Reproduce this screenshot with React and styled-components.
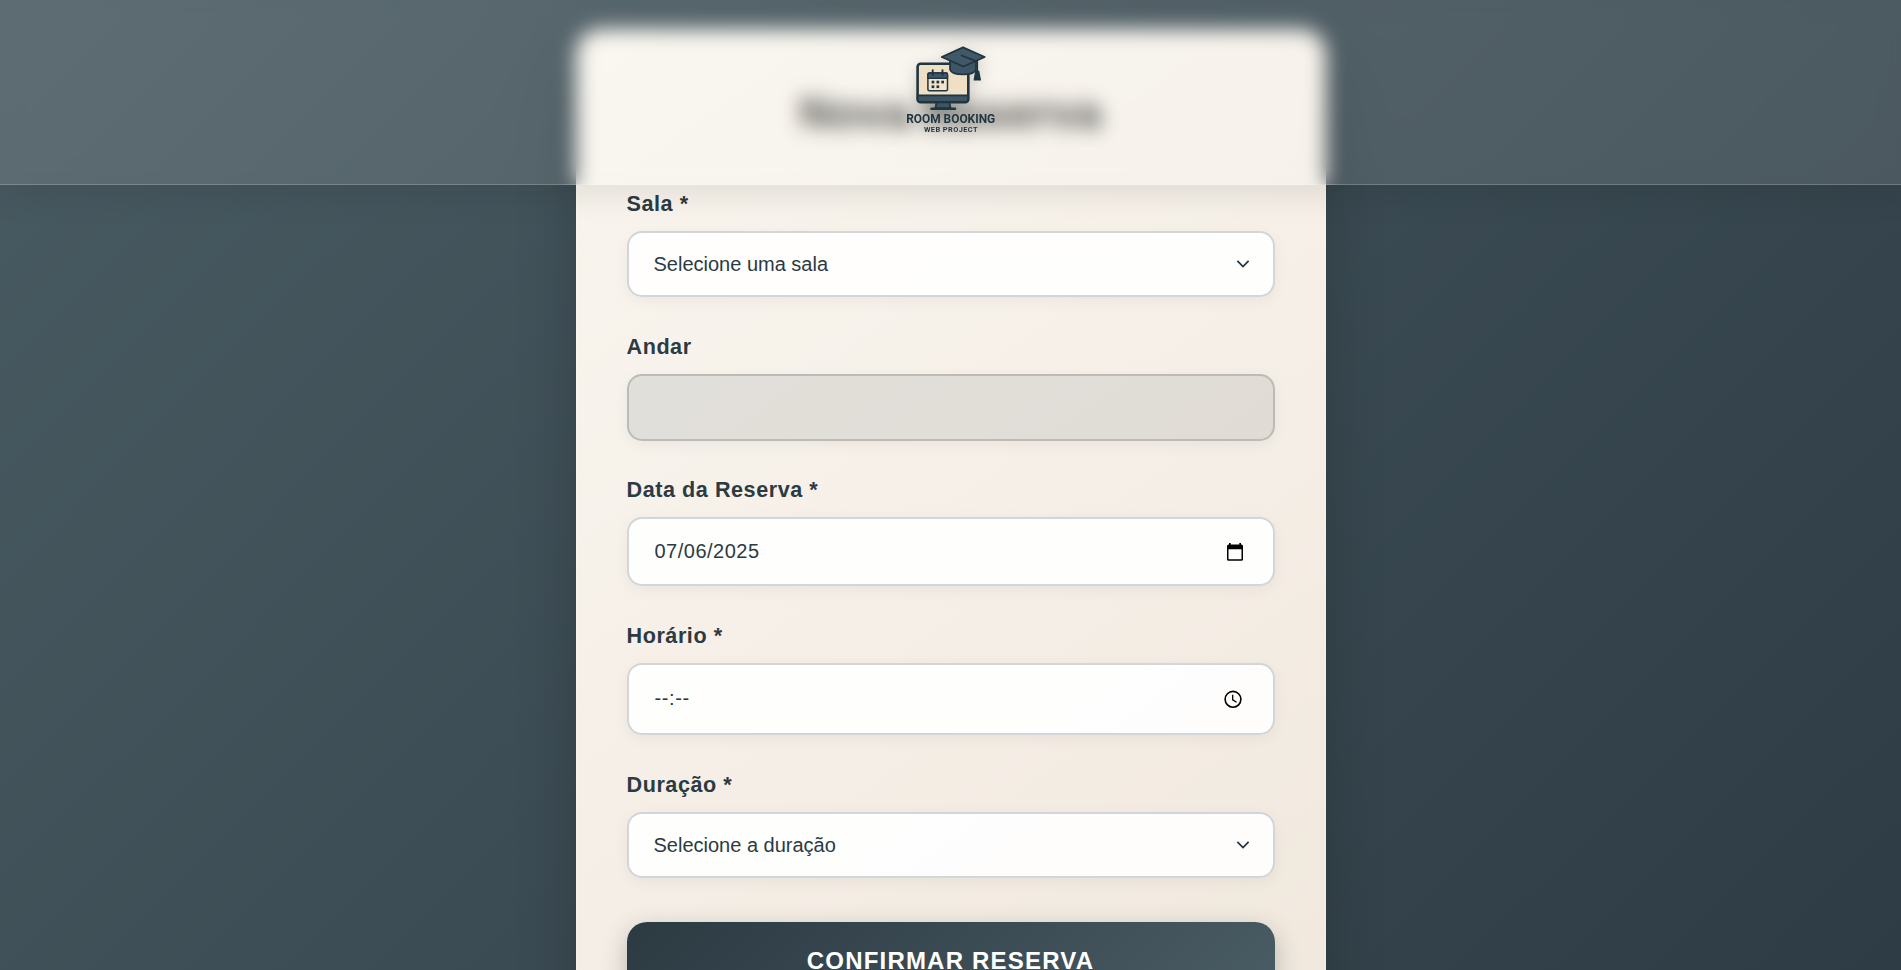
import React from "react";
import styled, { createGlobalStyle, css } from "styled-components";

const GlobalStyle = createGlobalStyle`
  * { box-sizing: border-box; }
  html, body { margin: 0; height: 100%; overflow: hidden; }
  body { font-family: "Liberation Sans", Arial, sans-serif; color: #2c3a42; }
`;

const Page = styled.div`
  height: 970px;
  overflow: hidden;
  display: flex;
  justify-content: center;
  align-items: flex-start;
  padding-top: 29px;
  background: linear-gradient(135deg, #495b62 0%, #2e3c45 100%);
`;

const Header = styled.header`
  position: fixed;
  inset: 0 0 auto 0;
  z-index: 10;
  height: 185px;
  display: flex;
  justify-content: center;
  align-items: flex-start;
  padding: 39.5px 2px 0 0;
  background: rgba(255, 255, 255, 0.11);
  backdrop-filter: blur(10px);
  border-bottom: 1px solid rgba(255, 255, 255, 0.2);
  box-shadow: 0 8px 32px rgba(0, 0, 0, 0.1);
`;

const LogoArt = styled.svg`
  display: block;
  filter: drop-shadow(0 4px 8px rgba(0, 0, 0, 0.16));
`;

const Card = styled.main`
  width: 750px;
  height: 1040px;
  flex: none;
  padding: 50px;
  border: 1px solid rgba(255, 255, 255, 0.2);
  border-radius: 25px;
  background: linear-gradient(145deg, #f9f6ef 0%, #f5eee6 58%, #f0e8dc 100%) border-box;
  box-shadow: 0 20px 60px rgba(0, 0, 0, 0.2);
`;

const Title = styled.h1`
  position: relative;
  top: -2px;
  margin: 0 0 43.7px;
  font-size: 44.8px;
  line-height: 68px;
  letter-spacing: 0.5px;
  text-align: center;
  color: #3f403d;
  text-shadow: 0 2px 4px rgba(0, 0, 0, 0.1);
`;

const Form = styled.form`
  display: flex;
  flex-direction: column;
  gap: 37.6px;
`;

const Field = styled.div`
  display: flex;
  flex-direction: column;
  gap: 15px;
`;

const Label = styled.label`
  font-size: 21.6px;
  font-weight: 700;
  line-height: 24px;
  letter-spacing: 0.55px;
`;

const Control = styled.div`
  height: ${(p) => p.$height}px;
  display: flex;
  align-items: center;
  padding: 0 ${(p) => p.$end}px 0 ${(p) => p.$start}px;
  border: 2px solid #d1d6da;
  border-radius: 15px;
  background: rgba(255, 255, 255, 0.9);
  box-shadow: 0 4px 15px rgba(0, 0, 0, 0.05);
  ${(p) =>
    p.$disabled &&
    css`
      background: rgba(44, 58, 66, 0.1);
      border-color: #bbbcb9;
    `}
`;

const valueStyle = css`
  flex: 1;
  min-width: 0;
  margin: 0;
  padding: 0;
  border: 0;
  outline: 0;
  background: none;
  font: 20px "Liberation Sans", Arial, sans-serif;
  color: #2c3a42;
`;

const Select = styled.select`
  ${valueStyle}
  appearance: none;
`;

const Input = styled.input`
  ${valueStyle}
  letter-spacing: ${(p) => p.$spacing || 0}px;
`;

const Submit = styled.button`
  height: 78px;
  margin-top: 7px;
  border: 0;
  border-radius: 20px;
  color: #fff;
  font: 700 24px "Liberation Sans", Arial, sans-serif;
  letter-spacing: 1.2px;
  background: linear-gradient(135deg, #2c3a42 0%, #4a5c64 100%);
  box-shadow: 0 8px 25px rgba(44, 58, 66, 0.3);
`;

const Chevron = () => (
  <svg width="14" height="10" viewBox="0 0 14 10" fill="none" stroke="#23323b" strokeWidth="1.7">
    <path d="M1.4 1.900 7 7.500l5.600-5.600" />
  </svg>
);

const CalendarIcon = () => (
  <svg width="16" height="18" viewBox="0 0 16 18">
    <path
      fill="#000"
      fillRule="evenodd"
      d="M2 0h1.700v1.400h8.600V0H14v1.400h.4A1.600 1.600 0 0 1 16 3v13.200a1.600 1.600 0 0 1-1.600 1.600H1.600A1.600 1.600 0 0 1 0 16.200V3a1.600 1.600 0 0 1 1.600-1.600H2zM1.500 6.200v9.500c0 .4.200.6.600.6h11.800c.4 0 .6-.2.6-.6V6.200z"
    />
  </svg>
);

const ClockIcon = () => (
  <svg width="18" height="18" viewBox="0 0 18 18" fill="none" stroke="#000">
    <circle cx="9" cy="9.300" r="7.900" strokeWidth="1.600" />
    <path d="M8.700 4.800v5l3.900 2.400" strokeWidth="1.300" />
  </svg>
);

const Logo = () => (
  <LogoArt width="100" height="100" viewBox="0 0 100 100" role="img" aria-label="Room Booking Web Project">
    <g stroke="#1f353f" strokeLinejoin="round" strokeLinecap="round">
      <rect x="17.600" y="23.700" width="50.700" height="38.500" rx="3" fill="#efdfc4" strokeWidth="2.600" />
      <path d="M17.700 55.300h50.400V59.500a2.500 2.500 0 0 1-2.500 2.500H20.200a2.500 2.500 0 0 1-2.500-2.500z" fill="#3d5564" strokeWidth="1.800" />
      <path d="M36.500 62.500h13l1 5.500h-15z" fill="#3d5564" strokeWidth="1.700" />
      <path d="M31.500 68.700h23.500" strokeWidth="2.600" />
      <rect x="27.900" y="33" width="19.600" height="17.700" rx="1.500" fill="#f3e5cd" strokeWidth="1.500" />
      <path d="M27.900 38.300v-3.800a1.500 1.500 0 0 1 1.500-1.500h16.600a1.500 1.500 0 0 1 1.500 1.500v3.800z" fill="#3d5564" strokeWidth="1.300" />
      <path d="M32.700 30.300v4.500M42.500 30.300v4.500" strokeWidth="1.900" />
      <path d="M50 20v9.500c1 3.500 6.500 5 13 5s12-1.500 13-5V20z" fill="#3d5564" strokeWidth="1.700" />
      <path d="M41.700 17 63 7.400l21.700 9.600L63.500 26.500z" fill="#405868" strokeWidth="1.800" />
      <path d="m61.700 15.500 15.500 6.200v9.500" fill="none" strokeWidth="1.800" />
      <path d="M75.700 31h3l1.700 9h-6.200z" fill="#1f353f" strokeWidth="1.200" />
    </g>
    <g fill="#1f353f" stroke="none">
      <rect x="31.600" y="40.700" width="2.700" height="2.700" />
      <rect x="36.500" y="40.700" width="2.700" height="2.700" />
      <rect x="41.300" y="40.700" width="2.700" height="2.700" />
      <rect x="31.600" y="45.400" width="2.700" height="2.700" />
      <rect x="36.500" y="45.400" width="2.700" height="2.700" />
      <text x="6.200" y="83.400" fontFamily="Roboto, sans-serif" fontWeight="700" fontSize="13" textLength="89" lengthAdjust="spacingAndGlyphs">ROOM BOOKING</text>
      <text x="24" y="92" fontFamily="Roboto, sans-serif" fontWeight="700" fontSize="7.400" textLength="53.500" lengthAdjust="spacing">WEB PROJECT</text>
    </g>
  </LogoArt>
);

export default function App() {
  return (
    <>
      <GlobalStyle />
      <Header>
        <Logo />
      </Header>
      <Page>
        <Card>
          <Title>Nova Reserva</Title>
          <Form>
            <Field>
              <Label htmlFor="sala">Sala *</Label>
              <Control $height={66.3} $start={25} $end={23}>
                <Select id="sala">
                  <option>Selecione uma sala</option>
                </Select>
                <Chevron />
              </Control>
            </Field>
            <Field>
              <Label htmlFor="andar">Andar</Label>
              <Control $height={67} $start={25} $end={24} $disabled>
                <Input id="andar" disabled />
              </Control>
            </Field>
            <Field>
              <Label htmlFor="data">Data da Reserva *</Label>
              <Control $height={69} $start={26} $end={30}>
                <Input id="data" defaultValue="07/06/2025" $spacing={0.5} />
                <CalendarIcon />
              </Control>
            </Field>
            <Field>
              <Label htmlFor="horario">Horário *</Label>
              <Control $height={72.4} $start={26} $end={31}>
                <Input id="horario" defaultValue="--:--" $spacing={0.6} />
                <ClockIcon />
              </Control>
            </Field>
            <Field>
              <Label htmlFor="duracao">Duração *</Label>
              <Control $height={65.8} $start={25} $end={23}>
                <Select id="duracao">
                  <option>Selecione a duração</option>
                </Select>
                <Chevron />
              </Control>
            </Field>
            <Submit type="button">CONFIRMAR RESERVA</Submit>
          </Form>
        </Card>
      </Page>
    </>
  );
}
